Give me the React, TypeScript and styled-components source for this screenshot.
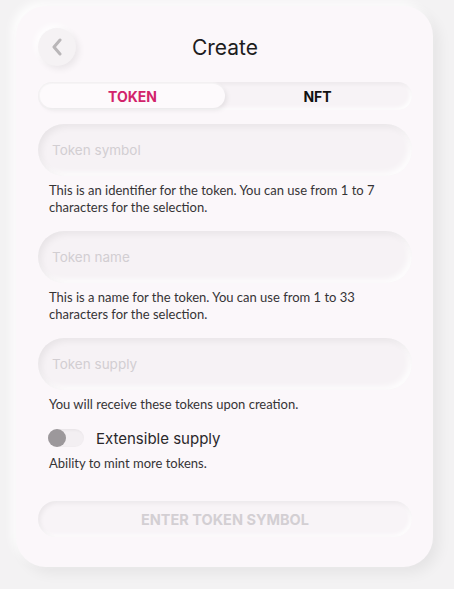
import React, { useState } from "react";
import styled, { createGlobalStyle } from "styled-components";

const Global = createGlobalStyle`
  html, body { margin: 0; padding: 0; background: #f3f2f3; }
  body { font-family: "Inter", "Noto Sans", sans-serif; width: 454px; height: 589px; overflow: hidden; }
  * { box-sizing: border-box; }
`;

const Page = styled.div`
  padding: 6px 21px 0 16px;
`;

const Card = styled.div`
  width: 417px;
  height: 561px;
  background: #fbf7fa;
  border-radius: 30px;
  box-shadow: 6px 6px 14px rgba(0,0,0,0.06), -4px -4px 10px rgba(255,255,255,0.9);
  padding: 22px 21px 0 22px;
  display: flex;
  flex-direction: column;
`;

const Header = styled.div`
  display: grid;
  grid-template-columns: 38px 1fr 38px;
  align-items: center;
  height: 38px;
`;

const BackButton = styled.button`
  width: 38px;
  height: 38px;
  border-radius: 50%;
  border: none;
  background: #f5f2f4;
  box-shadow: 3px 3px 7px rgba(0,0,0,0.07), -3px -3px 6px rgba(255,255,255,0.9);
  display: flex;
  align-items: center;
  justify-content: center;
  padding: 0;
`;

const Title = styled.h1`
  margin: 0;
  text-align: center;
  font-size: 21px;
  font-weight: 400;
  color: #1d1d1d;
`;

const Tabs = styled.div`
  margin-top: 16px;
  height: 28px;
  border-radius: 14px;
  background: #f7f3f6;
  box-shadow: inset 2px 2px 4px rgba(0,0,0,0.05), inset -2px -2px 4px rgba(255,255,255,0.9);
  display: grid;
  grid-template-columns: 1fr 1fr;
  padding: 2px;
`;

const Tab = styled.div<{ $active?: boolean }>`
  display: flex;
  align-items: center;
  justify-content: center;
  border-radius: 12px;
  font-size: 14px;
  font-weight: 700;
  color: ${p => (p.$active ? "#d2236b" : "#111")};
  background: ${p => (p.$active ? "#fdfafc" : "transparent")};
  box-shadow: ${p => (p.$active ? "2px 2px 5px rgba(0,0,0,0.08), -1px -1px 3px rgba(255,255,255,0.9)" : "none")};
`;

const Field = styled.div<{ $top: number }>`
  margin-top: ${p => p.$top}px;
  height: 52px;
  flex-shrink: 0;
  border-radius: 26px;
  background: #f6f2f5;
  box-shadow: inset 3px 3px 7px rgba(0,0,0,0.06), inset -3px -3px 6px rgba(255,255,255,0.9);
  display: flex;
  align-items: center;
  padding-left: 14px;
  font-size: 13.5px;
  color: #d2ced2;
`;

const Help = styled.p<{ $top?: number }>`
  margin: ${p => p.$top ?? 6}px 0 0 11px;
  font-family: "Lato", "Inter", sans-serif;
  font-size: 13px;
  line-height: 17px;
  color: #363436;
`;

const ToggleRow = styled.div`
  margin: 16px 0 0 10px;
  display: flex;
  align-items: center;
  gap: 12px;
  height: 18px;
`;

const Track = styled.div`
  width: 36px;
  height: 18px;
  border-radius: 9px;
  background: #f3eff2;
  box-shadow: inset 1px 1px 3px rgba(0,0,0,0.06);
  display: flex;
  align-items: center;
`;

const Knob = styled.div`
  width: 18px;
  height: 18px;
  border-radius: 50%;
  background: #9c989b;
`;

const ToggleLabel = styled.span`
  font-size: 15px;
  color: #2a282a;
`;

const Submit = styled.button`
  margin-top: 29px;
  height: 36px;
  flex-shrink: 0;
  border: none;
  border-radius: 18px;
  background: #f8f4f7;
  box-shadow: inset 2px 2px 5px rgba(0,0,0,0.06), inset -2px -2px 4px rgba(255,255,255,0.9);
  font-family: inherit;
  font-size: 14.5px;
  font-weight: 700;
  color: #d3cfd3;
`;

export default function App() {
  const [tab] = useState("token");
  return (
    <>
      <Global />
      <Page>
        <Card>
          <Header>
            <BackButton aria-label="Back">
              <svg width="12" height="18" viewBox="0 0 12 18">
                <path d="M9 2 L3 9 L9 16" fill="none" stroke="#b9b6b8" strokeWidth="3" strokeLinecap="round" strokeLinejoin="round" />
              </svg>
            </BackButton>
            <Title>Create</Title>
            <span />
          </Header>
          <Tabs>
            <Tab $active={tab === "token"}>TOKEN</Tab>
            <Tab $active={tab === "nft"}>NFT</Tab>
          </Tabs>
          <Field $top={14}>Token symbol</Field>
          <Help>This is an identifier for the token. You can use from 1 to 7 characters for the selection.</Help>
          <Field $top={15}>Token name</Field>
          <Help>This is a name for the token. You can use from 1 to 33 characters for the selection.</Help>
          <Field $top={15}>Token supply</Field>
          <Help>You will receive these tokens upon creation.</Help>
          <ToggleRow>
            <Track><Knob /></Track>
            <ToggleLabel>Extensible supply</ToggleLabel>
          </ToggleRow>
          <Help $top={8}>Ability to mint more tokens.</Help>
          <Submit>ENTER TOKEN SYMBOL</Submit>
        </Card>
      </Page>
    </>
  );
}
